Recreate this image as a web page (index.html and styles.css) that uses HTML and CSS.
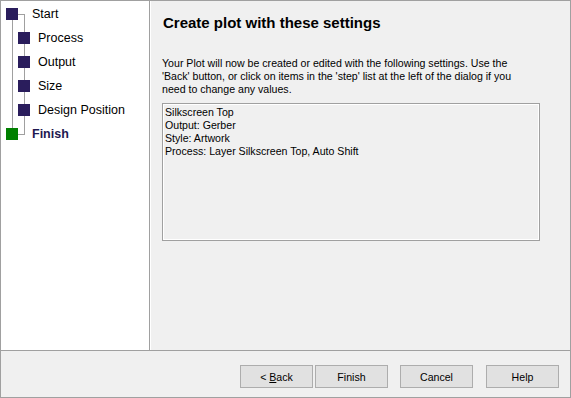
FILE: index.html
```html
<!DOCTYPE html>
<html lang="en">
<head>
  <meta charset="UTF-8" />
  <title>Create Plot</title>
  <link rel="stylesheet" href="styles.css">
</head>
<body>

  <div class="dialog">
    <div class="main">
      <div class="steps">
        <svg class="tree" width="31" height="145" viewBox="0 0 31 145">
          <path d="M11.5 19V127M17 13.5H23.5M23.5 13V134M17 133.5H24" stroke="#a0a0a0" fill="none" />
          <rect x="5" y="7" width="12" height="12" fill="#2a1d5c" />
          <rect x="17" y="31" width="12" height="12" fill="#2a1d5c" />
          <rect x="17" y="55" width="12" height="12" fill="#2a1d5c" />
          <rect x="17" y="79" width="12" height="12" fill="#2a1d5c" />
          <rect x="17" y="103" width="12" height="12" fill="#2a1d5c" />
          <rect x="5" y="127" width="12" height="12" fill="#008000" />
        </svg>
        <ul class="step-list">
          <li>Start</li>
          <li class="child">Process</li>
          <li class="child">Output</li>
          <li class="child">Size</li>
          <li class="child">Design Position</li>
          <li class="current">Finish</li>
        </ul>
      </div>

      <div class="content">
        <h1>Create plot with these settings</h1>
        <p class="intro">Your Plot will now be created or edited with the following settings. Use the 'Back' button, or click on items in the 'step' list at the left of the dialog if you need to change any values.</p>
        <div class="summary">
          <div>Silkscreen Top</div>
          <div>Output: Gerber</div>
          <div>Style: Artwork</div>
          <div>Process: Layer Silkscreen Top, Auto Shift</div>
        </div>
      </div>
    </div>

    <div class="footer">
      <button class="btn back">&lt; <u>B</u>ack</button>
      <button class="btn finish">Finish</button>
      <button class="btn cancel">Cancel</button>
      <button class="btn help">Help</button>
    </div>
  </div>

</body>
</html>
```

FILE: styles.css
```css
body {
  margin: 0;
  font-family: 'Liberation Sans', Arial, sans-serif;
  background: #f0f0f0;
  color: #000;
}
.dialog {
  width: 571px;
  height: 398px;
  box-sizing: border-box;
  border: 1px solid #a0a0a0;
  display: flex;
  flex-direction: column;
  background: #f0f0f0;
}
.main {
  height: 349px;
  display: flex;
}
.steps {
  width: 149px;
  background: #fff;
  border-right: 1px solid #a0a0a0;
  display: flex;
  align-items: flex-start;
  padding-top: 1px;
  box-sizing: border-box;
}
.tree {
  display: block;
  margin-top: -1px;
  flex-shrink: 0;
}
.step-list {
  list-style: none;
  margin: 0;
  padding: 0;
  font-size: 12.5px;
}
.step-list li {
  height: 24px;
  line-height: 24px;
  white-space: nowrap;
}
.step-list .child {
  padding-left: 6px;
}
.step-list .current {
  font-weight: bold;
  color: #1e1850;
}
.content {
  flex: 1;
  border-left: 1px solid #fff;
  padding: 13px 0 0 11px;
}
.content h1 {
  margin: 0 0 0 1px;
  font-size: 15px;
  line-height: 18px;
  font-weight: bold;
}
.intro {
  margin: 25px 0 0;
  width: 360px;
  font-size: 10.6px;
  line-height: 13px;
}
.summary {
  margin-top: 7px;
  width: 378px;
  height: 138px;
  box-sizing: border-box;
  border: 1px solid #a0a0a0;
  box-shadow: inset 0 0 0 1px #fff;
  padding: 2px 2px;
  font-size: 10.6px;
  line-height: 13px;
}
.footer {
  flex: 1;
  border-top: 1px solid #a0a0a0;
  display: flex;
  justify-content: flex-end;
  align-items: flex-start;
  padding: 14px 11px 0 0;
}
.btn {
  width: 73px;
  height: 23px;
  margin: 0;
  padding: 0;
  background: #e1e1e1;
  border: 1px solid #adadad;
  font-family: 'Liberation Sans', Arial, sans-serif;
  font-size: 10.6px;
  color: #000;
}
.finish {
  margin-left: 2px;
}
.cancel {
  margin-left: 12px;
}
.help {
  margin-left: 13px;
}
```
